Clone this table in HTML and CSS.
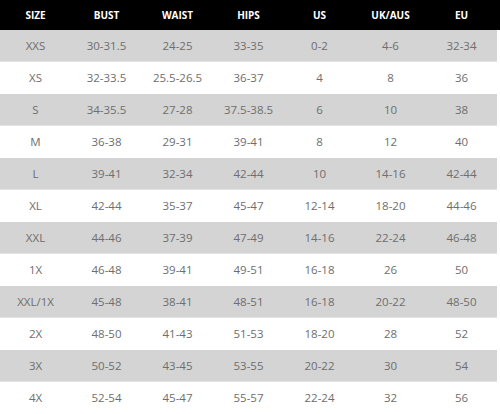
FILE: index.html
```html
<!DOCTYPE html>
<html>
<head>
<meta charset="utf-8">
<link rel="stylesheet" href="styles.css">
</head>
<body>
<div class="chart">
  <div class="row head">
    <div>SIZE</div><div>BUST</div><div>WAIST</div><div>HIPS</div><div>US</div><div>UK/AUS</div><div>EU</div>
  </div>
  <div class="row shade"><div>XXS</div><div>30-31.5</div><div>24-25</div><div>33-35</div><div>0-2</div><div>4-6</div><div>32-34</div></div>
  <div class="row"><div>XS</div><div>32-33.5</div><div>25.5-26.5</div><div>36-37</div><div>4</div><div>8</div><div>36</div></div>
  <div class="row shade"><div>S</div><div>34-35.5</div><div>27-28</div><div>37.5-38.5</div><div>6</div><div>10</div><div>38</div></div>
  <div class="row"><div>M</div><div>36-38</div><div>29-31</div><div>39-41</div><div>8</div><div>12</div><div>40</div></div>
  <div class="row shade"><div>L</div><div>39-41</div><div>32-34</div><div>42-44</div><div>10</div><div>14-16</div><div>42-44</div></div>
  <div class="row"><div>XL</div><div>42-44</div><div>35-37</div><div>45-47</div><div>12-14</div><div>18-20</div><div>44-46</div></div>
  <div class="row shade"><div>XXL</div><div>44-46</div><div>37-39</div><div>47-49</div><div>14-16</div><div>22-24</div><div>46-48</div></div>
  <div class="row"><div>1X</div><div>46-48</div><div>39-41</div><div>49-51</div><div>16-18</div><div>26</div><div>50</div></div>
  <div class="row shade"><div>XXL/1X</div><div>45-48</div><div>38-41</div><div>48-51</div><div>16-18</div><div>20-22</div><div>48-50</div></div>
  <div class="row"><div>2X</div><div>48-50</div><div>41-43</div><div>51-53</div><div>18-20</div><div>28</div><div>52</div></div>
  <div class="row shade"><div>3X</div><div>50-52</div><div>43-45</div><div>53-55</div><div>20-22</div><div>30</div><div>54</div></div>
  <div class="row"><div>4X</div><div>52-54</div><div>45-47</div><div>55-57</div><div>22-24</div><div>32</div><div>56</div></div>
</div>
</body>
</html>
```

FILE: styles.css
```css
html, body {
  margin: 0;
  padding: 0;
  background: #ffffff;
}
.chart {
  width: 500px;
  font-family: "Open Sans", "Noto Sans", sans-serif;
}
.row {
  display: grid;
  grid-template-columns: repeat(7, 71px);
  height: 32px;
  align-items: center;
  box-sizing: border-box;
  font-size: 11.5px;
  color: #6e6e6e;
  width: 497px;
  padding-bottom: 1px;
}
.row > div {
  text-align: center;
}
.head {
  background: #000000;
  color: #ffffff;
  font-weight: 700;
  font-size: 10px;
  height: 30px;
  width: 500px;
  padding-bottom: 0;
}
.shade {
  background: #d4d4d4;
  border-bottom: 1px solid #e4e4e4;
}
```
